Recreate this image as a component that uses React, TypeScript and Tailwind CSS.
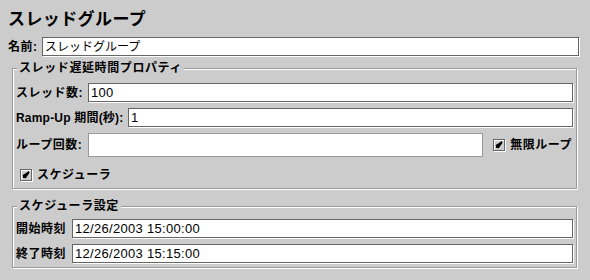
import React from 'react';

const labelFont = "font-['Liberation_Sans','Noto_Sans_CJK_JP',sans-serif]";

const Field: React.FC<{ value?: string; className?: string; muted?: boolean }> = ({
  value = '',
  className = '',
  muted = false,
}) => (
  <div
    className={
      'flex items-center bg-white px-[2px] text-[12px] text-black whitespace-nowrap ' +
      labelFont +
      ' ' +
      (muted ? 'border border-[#999999] ' : 'border border-[#666666] shadow-[1px_1px_0_#ffffff] ') +
      className
    }
  >
    {value}
  </div>
);

const Check: React.FC = () => (
  <div className="w-[12px] h-[12px] shrink-0 border border-[#666666] bg-[#cccccc] shadow-[inset_1px_1px_0_#ffffff,1px_1px_0_#ffffff] flex items-center justify-center">
    <svg width="10" height="10" viewBox="0 0 10 10">
      <path d="M2 5 L2 8 L4 8 L8 3 L8 1 Z" fill="#000" />
      <path d="M2 5 L4 7 M4 8 L8 2" stroke="#000" strokeWidth="1.5" fill="none" />
    </svg>
  </div>
);

const Label: React.FC<{ children: React.ReactNode; className?: string }> = ({ children, className = '' }) => (
  <span className={'shrink-0 font-bold text-[12px] text-black whitespace-nowrap ' + labelFont + ' ' + className}>
    {children}
  </span>
);

const Group: React.FC<{ title: string; className?: string; children: React.ReactNode }> = ({
  title,
  className = '',
  children,
}) => (
  <div
    className={
      'relative ml-[12px] w-[565px] border border-[#999999] shadow-[inset_1px_1px_0_#ffffff,1px_1px_0_#ffffff] ' +
      className
    }
  >
    <span
      className={
        'absolute left-[4px] top-[-9px] bg-[#cccccc] px-[2px] leading-[16px] font-bold text-[12px] tracking-[0.6px] text-black ' +
        labelFont
      }
    >
      {title}
    </span>
    {children}
  </div>
);

export default function App() {
  return (
    <div className="w-[590px] h-[280px] bg-[#cccccc] overflow-hidden">
      {/* Title */}
      <div className={'pt-[10px] pl-[8px] leading-[20px] text-[17px] font-bold tracking-[0.4px] text-black ' + labelFont}>
        スレッドグループ
      </div>

      {/* Name */}
      <div className="mt-[7px] flex items-center pl-[8px] pr-[11px]">
        <Label className="w-[34px] tracking-[0.5px]">名前:</Label>
        <Field value="スレッドグループ" className="flex-1 h-[19px]" />
      </div>

      {/* Thread properties */}
      <Group title="スレッド遅延時間プロパティ" className="mt-[12px] h-[121px] pt-[14px] pl-[3px] pr-[3px]">
        <div className="flex items-center">
          <Label className="w-[72px] tracking-[0.5px]">スレッド数:</Label>
          <Field value="100" className="flex-1 h-[19px] text-[13px] tracking-[0.3px]" />
        </div>
        <div className="mt-[6px] flex items-center">
          <Label className="w-[112px] tracking-[0.2px]">Ramp-Up 期間(秒):</Label>
          <Field value="1" className="flex-1 h-[19px] text-[13px]" />
        </div>
        <div className="mt-[6px] flex items-center">
          <Label className="w-[72px] tracking-[0.5px]">ループ回数:</Label>
          <Field muted className="flex-1 h-[24px]" />
          <div className="ml-[10px] mr-[1px] flex items-center gap-[5px]">
            <Check />
            <Label className="tracking-[0.5px]">無限ループ</Label>
          </div>
        </div>
        <div className="mt-[9px] pl-[4px] flex items-center gap-[5px]">
          <Check />
          <Label className="tracking-[0.5px]">スケジューラ</Label>
        </div>
      </Group>

      {/* Scheduler */}
      <Group title="スケジューラ設定" className="mt-[17px] h-[62px] pt-[12px] pl-[3px] pr-[3px]">
        <div className="flex items-center">
          <Label className="w-[56px] tracking-[0.5px]">開始時刻</Label>
          <Field value="12/26/2003 15:00:00" className="flex-1 h-[19px] text-[13px] tracking-[0.3px]" />
        </div>
        <div className="mt-[6px] flex items-center">
          <Label className="w-[56px] tracking-[0.5px]">終了時刻</Label>
          <Field value="12/26/2003 15:15:00" className="flex-1 h-[19px] text-[13px] tracking-[0.3px]" />
        </div>
      </Group>
    </div>
  );
}
